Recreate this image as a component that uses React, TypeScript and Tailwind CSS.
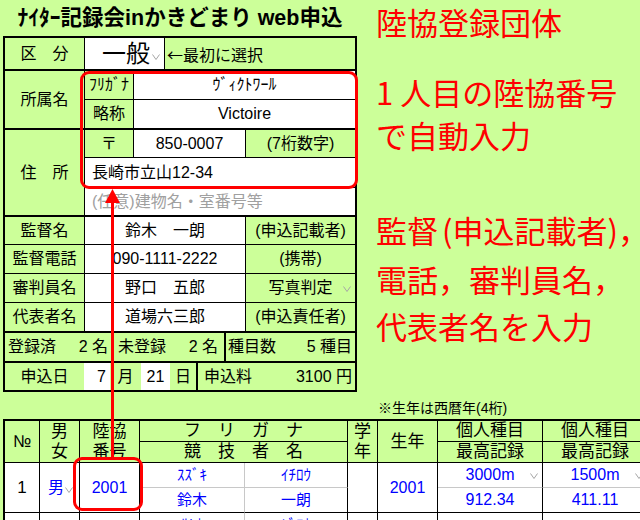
import type { ReactNode } from 'react'

function Chev({ className = '' }: { className?: string }) {
  return (
    <svg width="8" height="6" viewBox="0 0 8 6" className={className}>
      <path d="M0.5 0.5 L4 5.5 L7.5 0.5" fill="none" stroke="#a6a6a6" strokeWidth="1" />
    </svg>
  )
}

interface PersonRow {
  label: string
  value: string
  note: ReactNode
  h: string
}

const PEOPLE: PersonRow[] = [
  { label: '監督名', value: '鈴木　一朗', note: '(申込記載者)', h: 'h-[28px] border-b' },
  { label: '監督電話', value: '090-1111-2222', note: '(携帯)', h: 'h-[29px] border-b' },
  {
    label: '審判員名',
    value: '野口　五郎',
    note: (
      <>
        写真判定
        <Chev className="absolute right-[4px] top-[12px]" />
      </>
    ),
    h: 'h-[29px] border-b',
  },
  { label: '代表者名', value: '道場六三郎', note: '(申込責任者)', h: 'h-[30px] border-b-2' },
]

function Form() {
  return (
    <div className="ml-[3px] w-[354px] border-2 border-black text-[16px] text-black">
      {/* 区分 */}
      <div className="flex h-[33px] border-b-2 border-black">
        <div className="flex w-[80px] items-center justify-center border-r border-black">区　分</div>
        <div className="flex w-[80px] items-center justify-end border-r border-black bg-white pr-[4px]">
          <span className="text-[24px] leading-none">一般</span>
          <Chev className="ml-[2px] mt-[6px]" />
        </div>
        <div className="flex flex-1 items-center pl-[2px] font-['Noto_Sans_CJK_JP',sans-serif]">←最初に選択</div>
      </div>

      {/* 所属名 */}
      <div className="flex h-[59px] border-b-2 border-black">
        <div className="flex w-[80px] items-center justify-center border-r border-black">所属名</div>
        <div className="flex flex-1 flex-col">
          <div className="flex h-[29px] border-b border-black">
            <div className="flex w-[49px] items-center justify-center border-r border-black">ﾌﾘｶﾞﾅ</div>
            <div className="flex flex-1 items-center justify-center bg-white">ｳﾞｨｸﾄﾜｰﾙ</div>
          </div>
          <div className="flex h-[28px]">
            <div className="flex w-[49px] items-center justify-center border-r border-black">略称</div>
            <div className="flex flex-1 items-center justify-center bg-white">Victoire</div>
          </div>
        </div>
      </div>

      {/* 住所 */}
      <div className="flex h-[87px] border-b-2 border-black">
        <div className="flex w-[80px] items-center justify-center border-r border-black">住　所</div>
        <div className="flex flex-1 flex-col">
          <div className="flex h-[28px] border-b border-black">
            <div className="flex w-[49px] items-center justify-center border-r border-black">〒</div>
            <div className="flex w-[112px] items-center justify-center border-r border-black bg-white">850-0007</div>
            <div className="flex flex-1 items-center justify-center">(7桁数字)</div>
          </div>
          <div className="flex h-[30px] items-center border-b border-black bg-white pl-[7px]">長崎市立山12-34</div>
          <div className="flex h-[27px] items-center bg-white pl-[7px] text-[#a0a0a0]">(任意)建物名・室番号等</div>
        </div>
      </div>

      {PEOPLE.map((p) => (
        <div key={p.label} className={`flex border-black ${p.h}`}>
          <div className="flex w-[80px] items-center justify-center border-r border-black">{p.label}</div>
          <div className="flex w-[161px] items-center justify-center border-r border-black bg-white">{p.value}</div>
          <div className="relative flex flex-1 items-center justify-center">{p.note}</div>
        </div>
      ))}

      {/* 登録数 */}
      <div className="flex h-[30px] border-b-2 border-black">
        <div className="flex w-[109px] items-center justify-between border-r-2 border-black pl-[3px] pr-[4px]">
          <span>登録済</span>
          <span>2 名</span>
        </div>
        <div className="flex w-[112px] items-center justify-between border-r-2 border-black pl-[4px] pr-[6px]">
          <span>未登録</span>
          <span>2 名</span>
        </div>
        <div className="flex flex-1 items-center justify-between pl-[2px] pr-[3px]">
          <span>種目数</span>
          <span>5 種目</span>
        </div>
      </div>

      {/* 申込日 */}
      <div className="flex h-[27px]">
        <div className="flex w-[79px] items-center justify-center">申込日</div>
        <div className="flex w-[26px] items-center justify-end bg-white pr-[4px]">7</div>
        <div className="flex w-[31px] items-center justify-center">月</div>
        <div className="flex w-[29px] items-center justify-center bg-white">21</div>
        <div className="flex w-[28px] items-center justify-center border-r-2 border-black">日</div>
        <div className="flex flex-1 items-center justify-between pl-[6px] pr-[3px]">
          <span>申込料</span>
          <span>3100 円</span>
        </div>
      </div>
    </div>
  )
}

function Entries() {
  const hd = 'flex items-center justify-center border-r border-b border-black text-[17px] leading-[20px]'
  const td = 'flex items-center justify-center bg-white text-[15px] text-[#0000ff]'
  return (
    <div className="ml-[3px] grid w-max grid-cols-[35px_40px_60px_105px_103px_30px_60px_105px_105px] grid-rows-[21px_21px_25px_25px_25px_25px] border-l-2 border-t-2 border-black">
      {/* header */}
      <div className={`${hd} col-start-1 row-span-2 row-start-1`}>№</div>
      <div className={`${hd} col-start-2 row-span-2 row-start-1 flex-col`}>
        <span>男</span>
        <span>女</span>
      </div>
      <div className={`${hd} col-start-3 row-span-2 row-start-1 flex-col`}>
        <span>陸協</span>
        <span>番号</span>
      </div>
      <div className={`${hd} col-span-2 col-start-4 row-start-1`}>フ　リ　ガ　ナ</div>
      <div className={`${hd} col-span-2 col-start-4 row-start-2`}>競　技　者　名</div>
      <div className={`${hd} col-start-6 row-span-2 row-start-1 flex-col`}>
        <span>学</span>
        <span>年</span>
      </div>
      <div className={`${hd} col-start-7 row-span-2 row-start-1`}>生年</div>
      <div className={`${hd} col-start-8 row-start-1`}>個人種目</div>
      <div className={`${hd} col-start-8 row-start-2`}>最高記録</div>
      <div className={`${hd} col-start-9 row-start-1`}>個人種目</div>
      <div className={`${hd} col-start-9 row-start-2`}>最高記録</div>

      {/* row 1 */}
      <div className={`${td} col-start-1 row-span-2 row-start-3 border-r border-b border-black text-[17px] !text-black`}>1</div>
      <div className={`${td} col-start-2 row-span-2 row-start-3 justify-end! border-r border-b border-black pr-[6px]`}>
        <span className="text-[16px]">男</span>
        <Chev className="ml-[1px] mt-[4px]" />
      </div>
      <div className={`${td} col-start-3 row-span-2 row-start-3 border-r border-b border-black text-[16px]`}>2001</div>
      <div className={`${td} col-start-4 row-start-3 border-r border-b border-r-[#c8c8c8] border-b-[#c8c8c8]`}>ｽｽﾞｷ</div>
      <div className={`${td} col-start-5 row-start-3 border-r border-b border-r-black border-b-[#c8c8c8]`}>ｲﾁﾛｳ</div>
      <div className={`${td} col-start-4 row-start-4 border-r border-b border-r-[#c8c8c8] border-b-black`}>鈴木</div>
      <div className={`${td} col-start-5 row-start-4 border-r border-b border-black`}>一朗</div>
      <div className={`${td} col-start-6 row-span-2 row-start-3 border-r border-b border-black`} />
      <div className={`${td} col-start-7 row-span-2 row-start-3 border-r border-b border-black text-[16px]`}>2001</div>
      <div className={`${td} relative col-start-8 row-start-3 border-r border-b border-r-black border-b-[#c8c8c8] text-[16px]`}>
        3000m
        <Chev className="absolute right-[4px] top-[10px]" />
      </div>
      <div className={`${td} col-start-8 row-start-4 border-r border-b border-black text-[16px]`}>912.34</div>
      <div className={`${td} relative col-start-9 row-start-3 border-r border-b border-r-black border-b-[#c8c8c8] text-[16px]`}>
        1500m
        <Chev className="absolute right-[4px] top-[10px]" />
      </div>
      <div className={`${td} col-start-9 row-start-4 border-r border-b border-black text-[16px]`}>411.11</div>

      {/* row 2 */}
      <div className={`${td} col-start-1 row-span-2 row-start-5 border-r border-black`} />
      <div className={`${td} col-start-2 row-span-2 row-start-5 border-r border-black`} />
      <div className={`${td} col-start-3 row-span-2 row-start-5 border-r border-black`} />
      <div className={`${td} col-start-4 row-start-5 border-r border-r-[#c8c8c8]`}>ｻﾄｳ</div>
      <div className={`${td} col-start-5 row-start-5 border-r border-black`}>ｼﾞﾛｳ</div>
      <div className={`${td} col-start-6 row-span-2 row-start-5 border-r border-black`} />
      <div className={`${td} col-start-7 row-span-2 row-start-5 border-r border-black`} />
      <div className={`${td} col-start-8 row-start-5 border-r border-black`} />
      <div className={`${td} col-start-9 row-start-5 border-r border-black`} />
    </div>
  )
}

export default function App() {
  return (
    <div className="relative h-[520px] w-[640px] overflow-hidden bg-[#ccff99] font-['Liberation_Sans','Noto_Sans_CJK_JP',sans-serif] text-black">
      <div className="flex">
        <div className="w-[360px] shrink-0">
          <h1 className="flex h-[36px] items-center justify-center text-[21.5px] font-bold">
            ﾅｲﾀｰ記録会inかきどまり web申込
          </h1>
          <Form />
        </div>
        <div className="whitespace-nowrap pl-[16px] pt-[6px] font-['Noto_Sans_CJK_JP',sans-serif] text-[31px] leading-[31px] text-[#ff0000]">
          <div>陸協登録団体</div>
          <div className="mt-[39px]">1 人目の陸協番号</div>
          <div className="mt-[12px]">で自動入力</div>
          <div className="mt-[64px]">
            監督<span className="ml-[4px]">(申込記載者)，</span>
          </div>
          <div className="mt-[18px]">電話，審判員名，</div>
          <div className="mt-[16px]">代表者名を入力</div>
        </div>
      </div>

      <div className="h-[27px] pl-[378px] pt-[6px] text-[14px] leading-[20px]">※生年は西暦年(4桁)</div>

      <Entries />

      {/* red annotations */}
      <div className="absolute left-[80px] top-[71px] h-[118px] w-[278px] rounded-[9px] border-[3px] border-[#ff0000]" />
      <div className="absolute left-[111px] top-[200px] h-[257px] w-[3px] bg-[#ff0000]" />
      <svg className="absolute left-[105px] top-[189px]" width="15" height="14" viewBox="0 0 15 14">
        <polygon points="7.5,0 15,14 0,14" fill="#ff0000" />
      </svg>
      <div className="absolute left-[73px] top-[457px] h-[54px] w-[70px] rounded-[9px] border-[3px] border-[#ff0000]" />
    </div>
  )
}
